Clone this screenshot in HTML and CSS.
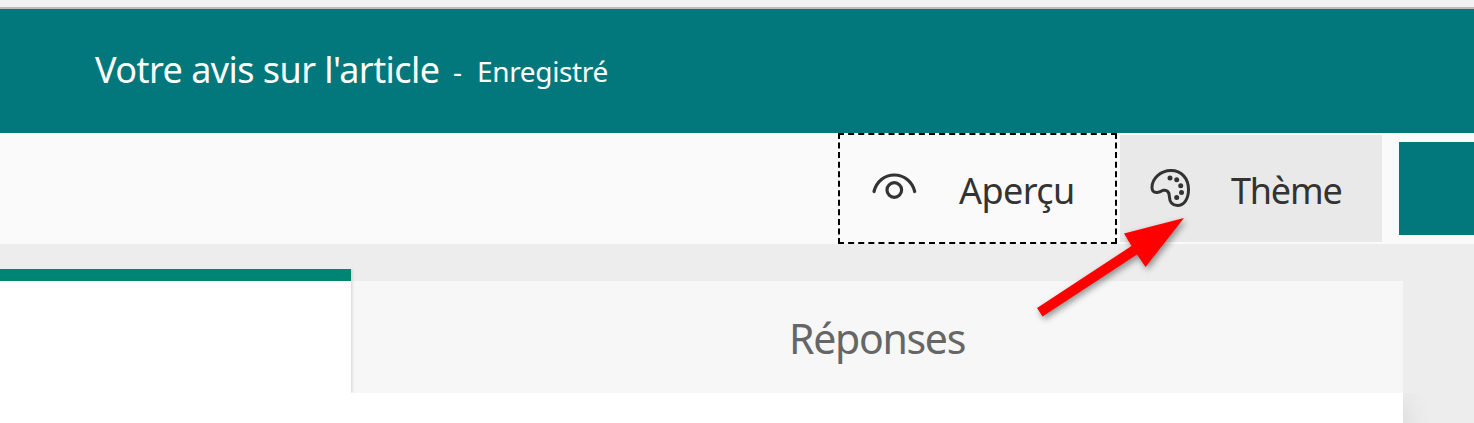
FILE: index.html
```
<!DOCTYPE html>
<html lang="fr">
<head>
  <meta charset="UTF-8" />
  <meta name="viewport" content="width=device-width, initial-scale=1.0" />
  <title>Votre avis sur l'article</title>
  <link rel="stylesheet" href="styles.css">
</head>
<body>
  <header class="header">
    <span class="title">Votre avis sur l'article</span>
    <span class="dash">-</span>
    <span class="status">Enregistré</span>
  </header>

  <nav class="toolbar">
    <button class="btn preview">
      <svg class="icon" width="46" height="30" viewBox="0 0 46 30" fill="none" stroke="#333" stroke-width="3.2" stroke-linecap="round">
        <path d="M2 19.500C4.500 9.500 12.500 3 22.300 3S40.200 9.500 42.700 19.500" />
        <circle cx="22.300" cy="18" r="7.300" />
      </svg>
      <span class="label">Aperçu</span>
    </button>
    <button class="btn theme">
      <svg class="icon" width="42" height="40" viewBox="0 0 42 40" fill="none" stroke="#333" stroke-width="3">
        <path d="M2 18.500C2 9.500 10.500 1.500 21 1.500C31.500 1.500 38.500 9.500 38.500 20.500C38.500 30 34 36.500 27.500 36.500C21.500 36.500 19.500 32 19.300 27C19.100 23 17 20.500 13.500 21.300C11 21.900 9.500 23.500 6.500 23.500C3.500 23.500 2 21.500 2 18.500Z" />
        <g fill="#333" stroke="none">
          <circle cx="20" cy="9" r="2.500" />
          <circle cx="26.700" cy="10.700" r="2.500" />
          <circle cx="30.700" cy="16.700" r="2.500" />
          <circle cx="31.500" cy="23.500" r="2.500" />
          <circle cx="26.700" cy="28.500" r="2.500" />
        </g>
      </svg>
      <span class="label">Thème</span>
    </button>
    <div class="send"></div>
  </nav>

  <main class="page">
    <div class="tabs">
      <div class="tab active"></div>
      <div class="tab answers">Réponses</div>
    </div>
    <div class="content"></div>
  </main>

  <svg class="arrow" width="190" height="130" viewBox="0 0 190 130">
    <path d="M164 18L104 33.500L111.500 46L17 108L22.500 116.500L117 54.500L125.500 67Z" fill="#f00" />
  </svg>
</body>
</html>
```

FILE: styles.css
```
* { box-sizing: border-box; }
body {
  font-family: "Noto Sans", "Open Sans", sans-serif;
  margin: 0;
  height: 423px;
  overflow: hidden;
  background: #ededed;
  color: #333;
}
.header {
  display: flex;
  align-items: flex-start;
  height: 133px;
  padding: 39px 0 0 95px;
  border-top: 7px solid #f3f3f3;
  background: #03787c;
  box-shadow: inset 0 2px #bdbdbd;
  color: #fff;
  line-height: 48px;
  white-space: nowrap;
}
.title {
  width: 358px;
  font-size: 36px;
  letter-spacing: -0.55px;
}
.dash {
  width: 24px;
  margin-top: 1px;
  font-size: 28px;
}
.status {
  margin-top: 1px;
  font-size: 28px;
  letter-spacing: -0.35px;
}
.toolbar {
  display: flex;
  height: 111px;
  padding-left: 838px;
  background: #fafafa;
}
.btn {
  display: flex;
  align-items: center;
  padding: 0;
  border: 0;
  background: none;
  color: inherit;
  font: inherit;
  font-size: 36px;
  text-align: left;
}
.icon {
  flex: none;
}
.preview {
  width: 279px;
  padding-left: 32px;
  border: 2px dashed #000;
}
.preview .icon {
  margin-top: -3px;
}
.preview .label {
  margin-left: 41px;
}
.theme {
  width: 262px;
  height: 107px;
  margin: 2px 17px 0 3px;
  padding-left: 30px;
  background: #e9e9e9;
}
.label {
  padding-top: 4px;
  letter-spacing: -0.6px;
}
.theme .label {
  margin-left: 39px;
  letter-spacing: -1.2px;
}
.send {
  flex: 1;
  height: 93px;
  margin-top: 9px;
  background: #03787c;
}
.page {
  width: 1403px;
  padding-top: 25px;
}
.tabs {
  display: flex;
  align-items: flex-end;
  height: 124px;
}
.active {
  width: 351px;
  height: 124px;
  border-top: 12px solid #008575;
  background: #fff;
  box-shadow: 1px 0 3px rgba(0, 0, 0, 0.15);
  clip-path: inset(0 -6px 0 0);
  z-index: 1;
}
.answers {
  flex: 1;
  height: 112px;
  background: #f7f7f7;
  color: #666;
  font-size: 41px;
  letter-spacing: -1.3px;
  line-height: 114px;
  text-align: center;
}
.content {
  height: 30px;
  background: #fff;
  box-shadow: 0 12px 32px rgba(0, 0, 0, 0.14);
  clip-path: inset(0 -40px 0 0);
}
.arrow {
  position: absolute;
  left: 1020px;
  top: 200px;
  filter: drop-shadow(2px 3px 3px rgba(0, 0, 0, 0.4));
}
```
